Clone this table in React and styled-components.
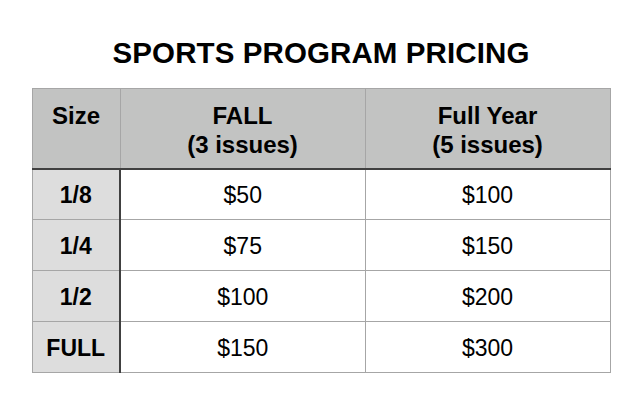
import React from "react";
import styled, { createGlobalStyle } from "styled-components";

const GlobalStyle = createGlobalStyle`
  html, body {
    margin: 0;
    padding: 0;
    background: #ffffff;
  }
  body {
    font-family: "Liberation Sans", Arial, sans-serif;
    color: #000;
  }
`;

const Page = styled.div`
  width: 642px;
  height: 404px;
  display: flex;
  flex-direction: column;
  align-items: center;
  padding-top: 36px;
  box-sizing: border-box;
`;

const Title = styled.h1`
  margin: 0 0 18px;
  font-size: 29.5px;
  line-height: 34px;
  font-weight: bold;
  letter-spacing: 0.1px;
`;

const Table = styled.table`
  width: 579px;
  border-collapse: collapse;
  border: 1px solid #a6a6a6;
  table-layout: fixed;
`;

const HeadCell = styled.th`
  background: #c2c3c2;
  height: 80px;
  padding: 12px 0 0;
  font-size: 24px;
  line-height: 29px;
  font-weight: bold;
  text-align: center;
  vertical-align: top;
  box-sizing: border-box;
  border-left: 1px solid #a6a6a6;
  border-bottom: 2px solid #404040;
  width: ${(p) => p.$w}px;
`;

const SizeCell = styled.td`
  background: #dddddd;
  height: 51px;
  padding: 3px 0 0;
  box-sizing: border-box;
  font-size: 23px;
  font-weight: bold;
  text-align: center;
  border-right: 2px solid #404040;
  border-top: 1px solid #a6a6a6;
`;

const PriceCell = styled.td`
  background: #fff;
  height: 51px;
  padding: 3px 0 0;
  box-sizing: border-box;
  font-size: 23px;
  text-align: center;
  border-left: 1px solid #a6a6a6;
  border-top: 1px solid #a6a6a6;
`;

const rows = [
  ["1/8", "$50", "$100"],
  ["1/4", "$75", "$150"],
  ["1/2", "$100", "$200"],
  ["FULL", "$150", "$300"],
];

export default function App() {
  return (
    <Page>
      <GlobalStyle />
      <Title>SPORTS PROGRAM PRICING</Title>
      <Table>
        <thead>
          <tr>
            <HeadCell $w={88}>Size</HeadCell>
            <HeadCell $w={245}>
              FALL
              <br />
              (3 issues)
            </HeadCell>
            <HeadCell $w={245}>
              Full Year
              <br />
              (5 issues)
            </HeadCell>
          </tr>
        </thead>
        <tbody>
          {rows.map(([size, fall, year]) => (
            <tr key={size}>
              <SizeCell>{size}</SizeCell>
              <PriceCell>{fall}</PriceCell>
              <PriceCell>{year}</PriceCell>
            </tr>
          ))}
        </tbody>
      </Table>
    </Page>
  );
}
